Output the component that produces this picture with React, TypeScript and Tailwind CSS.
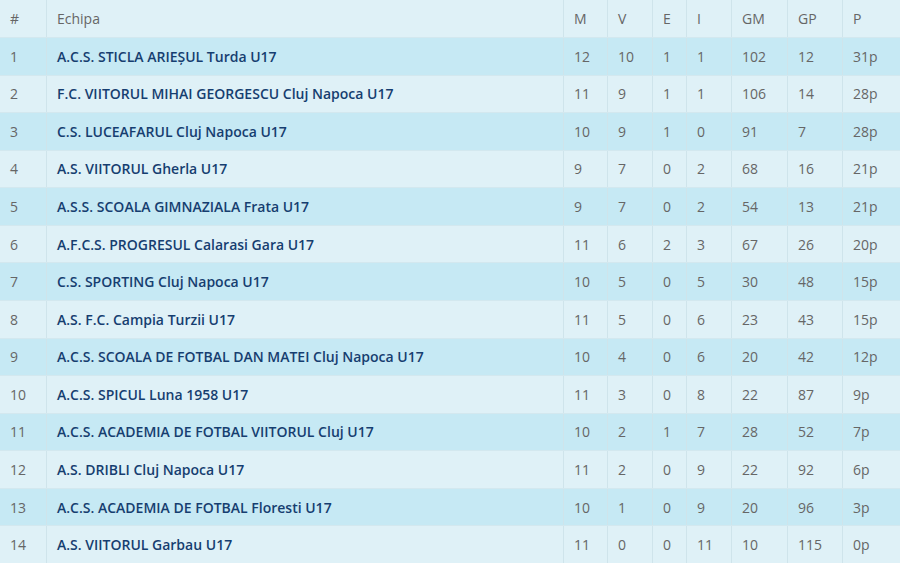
import React from "react";

const rows: [number, string, number, number, number, number, number, number, string][] = [
  [1, "A.C.S. STICLA ARIEȘUL Turda U17", 12, 10, 1, 1, 102, 12, "31p"],
  [2, "F.C. VIITORUL MIHAI GEORGESCU Cluj Napoca U17", 11, 9, 1, 1, 106, 14, "28p"],
  [3, "C.S. LUCEAFARUL Cluj Napoca U17", 10, 9, 1, 0, 91, 7, "28p"],
  [4, "A.S. VIITORUL Gherla U17", 9, 7, 0, 2, 68, 16, "21p"],
  [5, "A.S.S. SCOALA GIMNAZIALA Frata U17", 9, 7, 0, 2, 54, 13, "21p"],
  [6, "A.F.C.S. PROGRESUL Calarasi Gara U17", 11, 6, 2, 3, 67, 26, "20p"],
  [7, "C.S. SPORTING Cluj Napoca U17", 10, 5, 0, 5, 30, 48, "15p"],
  [8, "A.S. F.C. Campia Turzii U17", 11, 5, 0, 6, 23, 43, "15p"],
  [9, "A.C.S. SCOALA DE FOTBAL DAN MATEI Cluj Napoca U17", 10, 4, 0, 6, 20, 42, "12p"],
  [10, "A.C.S. SPICUL Luna 1958 U17", 11, 3, 0, 8, 22, 87, "9p"],
  [11, "A.C.S. ACADEMIA DE FOTBAL VIITORUL Cluj U17", 10, 2, 1, 7, 28, 52, "7p"],
  [12, "A.S. DRIBLI Cluj Napoca U17", 11, 2, 0, 9, 22, 92, "6p"],
  [13, "A.C.S. ACADEMIA DE FOTBAL Floresti U17", 10, 1, 0, 9, 20, 96, "3p"],
  [14, "A.S. VIITORUL Garbau U17", 11, 0, 0, 11, 10, 115, "0p"],
];

const cols = "grid grid-cols-[46px_517px_44px_45px_34px_45px_56px_55px_58px]";
const cell = "flex items-center pl-[10px] border-l border-[#cfe4eb] first:border-l-0";

export default function App() {
  const headers = ["#", "Echipa", "M", "V", "E", "I", "GM", "GP", "P"];
  return (
    <div
      className="w-[900px] h-[566px] bg-white text-[14px] text-[#666666]"
      style={{ fontFamily: '"Open Sans", sans-serif' }}
    >
      <div className={`${cols} h-[37px] bg-[#dff1f7]`}>
        {headers.map((h, i) => (
          <div key={i} className={`${cell} ${i === 1 ? "pl-[9px]" : ""} ${i === 2 ? "pl-[9px]" : ""}`}>
            {h}
          </div>
        ))}
      </div>
      {rows.map((r, idx) => (
        <div
          key={idx}
          className={`${cols} h-[37.57px] border-t border-[#d3e8ef] ${
            idx % 2 === 0 ? "bg-[#c6e9f4]" : "bg-[#dff1f7]"
          }`}
        >
          {r.map((v, i) => (
            <div
              key={i}
              className={`${cell} ${i === 1 ? "font-semibold text-[#163e70] pl-[9px]" : ""} ${i === 2 ? "pl-[9px]" : ""}`}
            >
              {v}
            </div>
          ))}
        </div>
      ))}
    </div>
  );
}
